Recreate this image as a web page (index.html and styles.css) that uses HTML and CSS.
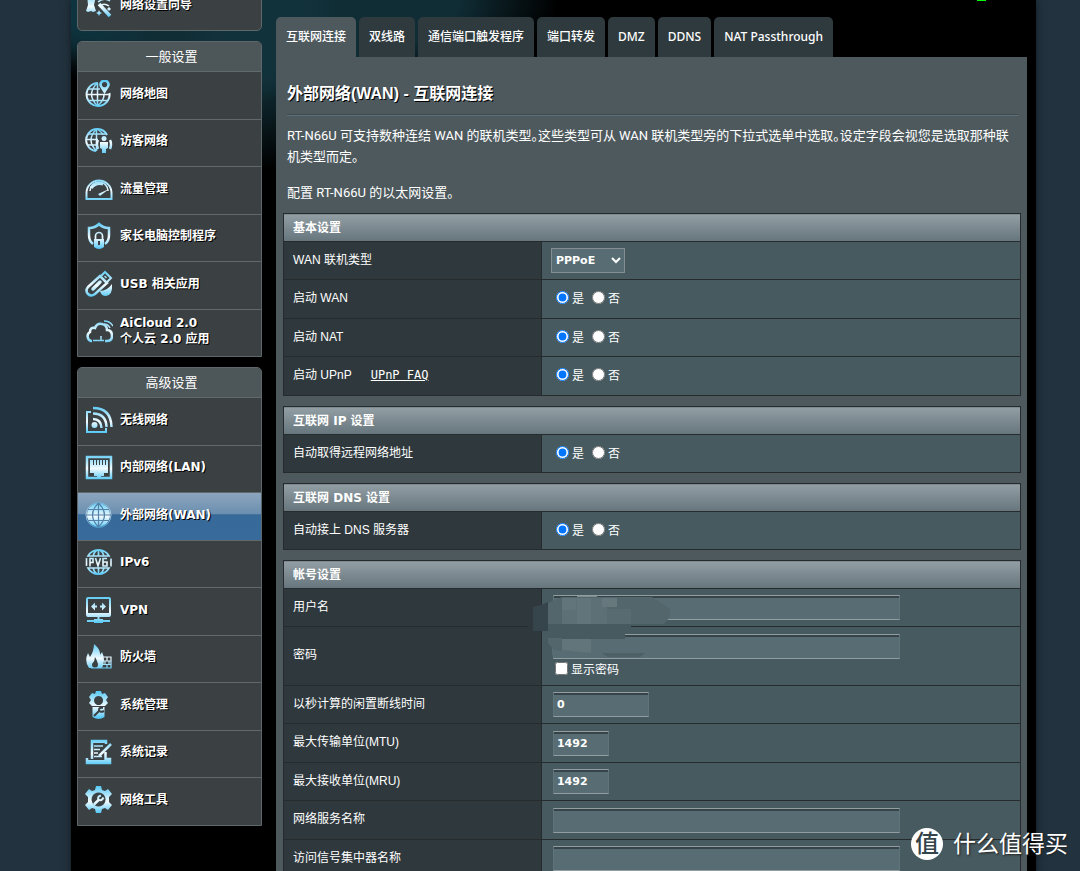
FILE: index.html
```html
<!DOCTYPE html>
<html lang="zh-CN">
<head>
<meta charset="utf-8">
<title>外部网络(WAN) - 互联网连接</title>
<link rel="stylesheet" href="styles.css">
</head>
<body>
<svg class="defs" width="0" height="0" aria-hidden="true">
  <defs>
    <linearGradient id="ice" gradientUnits="userSpaceOnUse" x1="0" y1="0" x2="0" y2="28">
      <stop offset="0" stop-color="#54c8f4"/>
      <stop offset=".55" stop-color="#f2fbff"/>
      <stop offset="1" stop-color="#45c3f5"/>
    </linearGradient>
  </defs>
</svg>
<div class="app">
  <span class="led"></span>
  <nav class="sidebar">
    <div class="group group-top">
      <a class="item" href="#"><svg class="icon" viewBox="0 0 28 28"><path class="f" d="M2 4l2-2h5l2 3-2 9 2 6-3 1-2-1-3 1-2-1 2-6z"/><path d="M14 13l11 12" stroke-width="3.500"/><path d="M13 11q6-5 12-1M16 14q4-2 8 1" stroke-width="1.500"/><path class="f" d="M14 19l1 2 2 1-2 1-1 2-1-2-2-1 2-1zM24 16l1 1 1 1-1 1-1 1-1-1-1-1 1-1z"/></svg><span>网络设置向导</span></a>
    </div>
    <div class="group">
      <h2>一般设置</h2>
      <a class="item" href="#"><svg class="icon" viewBox="0 0 28 28"><path d="M13 3A11.500 11.500 0 1 0 24.500 13" stroke-width="2"/><path d="M12.500 3v23M1 14.500h23M3 9h12M3.500 20.500h19M12.500 3q-12 11 0 23M12.500 26q7-6 6.500-12" stroke-width="1.500"/><path class="f" fill-rule="evenodd" d="M19.500 14l-4.500-7a5.200 5.200 0 1 1 9 0zM19.500 2a2.600 2.600 0 1 0 .1 0z"/></svg><span>网络地图</span></a>
      <a class="item" href="#"><svg class="icon" viewBox="0 0 28 28"><path d="M22 8A11 11 0 1 0 11 24" stroke-width="2"/><path d="M11.500 2v22M1 12.500h12M3 7h18M3 18h8M11.500 2q-11 11 0 22M12 2q6 4 6 6" stroke-width="1.500"/><circle class="f" cx="19" cy="11.500" r="2.500"/><path class="f" d="M15 15h8v6l-2 1v4h-4v-4l-2-1z"/><path d="M13 13q-2 4 0 9M25 13q2 4 0 9" stroke-width="2.500"/></svg><span>访客网络</span></a>
      <a class="item" href="#"><svg class="icon" viewBox="0 0 28 28"><path d="M1.500 24v-6a12 12 0 0 1 25 0v6z" stroke-width="2"/><path d="M5 16a9 9 0 0 1 18 0" stroke-width="1.500"/><path d="M6 13q5-6 12-4" stroke-width="3"/><path class="f" d="M24 14l-9 7-2-2z"/></svg><span>流量管理</span></a>
      <a class="item" href="#"><svg class="icon" viewBox="0 0 28 28"><path d="M8 22Q4 19 4 13V6q6 0 10-4 4 4 10 4v7q0 6-4 9" stroke-width="2.500"/><path d="M10.500 17v-3a3.500 3.500 0 0 1 7 0v3" stroke-width="1.700"/><path class="f" fill-rule="evenodd" d="M9 17h10v8q-5 4-10 0zM13 19v4h2v-4z"/></svg><span>家长电脑控制程序</span></a>
      <a class="item" href="#"><svg class="icon" viewBox="0 0 28 28"><path d="M3 17L15 6l7 7L10 24q-4 3-7 0-3-3 0-7z" stroke-width="2.500"/><path d="M16 6l4-4 6 6-4 4" stroke-width="2"/><path d="M8 19l7-7" stroke-width="3.500" stroke-linecap="round"/><path d="M19.500 6l2 2M22 4l2 2" stroke-width="1.500"/><path class="f" d="M15 21q7 0 12-7 1 11-6 12-5 0-6-5z"/></svg><span>USB 相关应用</span></a>
      <a class="item" href="#"><svg class="icon" viewBox="0 0 28 28"><path d="M7 24H6a5 5 0 0 1-1-9q0-5 5-4 2-5 7-4 5 1 5 6 5 0 5 6 0 5-5 5h-2" stroke-width="2.500"/><path d="M8 23.500h11M16 19v4M19 7q4 0 6 4M19 4q6 0 9 5" stroke-width="1.500"/></svg><span>AiCloud 2.0<br>个人云 2.0 应用</span></a>
    </div>
    <div class="group">
      <h2>高级设置</h2>
      <a class="item" href="#"><svg class="icon" viewBox="0 0 28 28"><path d="M6 6H2v20h19v-4" stroke-width="2"/><circle class="f" cx="9.500" cy="19" r="3"/><path d="M8 13q8 0 8.500 9M8 7.500q13 0 13.500 13.500M8 2q18 0 18.500 19" stroke-width="2.500"/></svg><span>无线网络</span></a>
      <a class="item" href="#"><svg class="icon" viewBox="0 0 28 28"><path d="M2 4h24v21H2z" stroke-width="2.500"/><path class="f" fill-rule="evenodd" d="M5 7h18v13h-4v3h-3v1h-4v-1H9v-3H5zM8 7v5h1V7zM11 7v5h1V7zM14 7v5h1V7zM17 7v5h1V7zM20 7v5h1V7z"/></svg><span>内部网络(LAN)</span></a>
      <a class="item active" href="#" aria-current="page"><svg class="icon" viewBox="0 0 28 28"><circle cx="13.500" cy="14" r="12.500" stroke-width="1" opacity=".6"/><circle class="f" cx="13.500" cy="14" r="11.500"/><path class="cut" d="M13.500 2v24M2 14h23M3 8.500h21M3 19.500h21M13.500 2q-12 12 0 24M13.500 2q12 12 0 24" stroke-width="1.200"/></svg><span>外部网络(WAN)</span></a>
      <a class="item" href="#"><svg class="icon" viewBox="0 0 28 28"><path d="M3 8a12 12 0 0 1 21 0zM3 20a12 12 0 0 0 21 0zM13.500 2v6M13.500 20v6M8 8q1-4 4-6M19 8q-1-4-4-6M8 20q1 4 4 6M19 20q-1 4-4 6" stroke-width="1.700"/><path d="M1.500 10v8M5 18.500v-8h3v4H5M10.500 10l2.500 8 2.500-8M22 10.500h-4v7.500h4v-4h-4M26 10.500v8" stroke-width="1.600"/></svg><span>IPv6</span></a>
      <a class="item" href="#"><svg class="icon" viewBox="0 0 28 28"><rect x="2" y="2" width="23" height="18" rx="1" stroke-width="2"/><path d="M2 18.500h23" stroke-width="3"/><path d="M8 10.500h4M15 10.500h4M13.500 20v5M2 25h23" stroke-width="2"/><path class="f" d="M6 10.500l4-4v8zM21 10.500l-4-4v8zM9 23h9v4H9z"/></svg><span>VPN</span></a>
      <a class="item" href="#"><svg class="icon" viewBox="0 0 28 28"><path class="f" fill-rule="evenodd" d="M9 1q7 6 6 11l2-3q4 8 0 16H4q-5-7-1-15l2 4q4-6 4-13zM10 14q0 4-3 7 0 4 3 4t3-4q-1-4-3-7z"/><path d="M18 14h8v11H6M17 18h9M17 21.500h9M22 14v4M20 18v3M24 18v3M22 21v4" stroke-width="1.200"/></svg><span>防火墙</span></a>
      <a class="item" href="#"><svg class="icon" viewBox="0 0 28 28"><path class="f" fill-rule="evenodd" d="M11 0h5l1 3 3-1 3 4-2 3 2 3-3 3H7l-3-3 2-3-2-3 3-4 3 1zM13.500 5a4.500 4.500 0 1 0 .1 0z"/><path class="f" d="M7.500 16h12v10q-6 4-12 0z"/><path class="cut" d="M9 25l5-5M18 17q-4-1-4 2 1 3 5 1" stroke-width="2"/></svg><span>系统管理</span></a>
      <a class="item" href="#"><svg class="icon" viewBox="0 0 28 28"><path d="M7 21V3h14v3M20.500 14v8M2 20v5h23v-4h-5" stroke-width="2.500"/><path class="f" d="M6 2h15v3H6zM1 22h25v4H1z"/><path d="M9 8h9M9 11.500h6M9 15h4M9 18.500h8" stroke-width="1.600"/><path d="M26 6L14 18" stroke-width="2.500"/></svg><span>系统记录</span></a>
      <a class="item" href="#"><svg class="icon" viewBox="0 0 28 28"><path class="f" fill-rule="evenodd" d="M11 0h5l1 4 3 1 3-2 4 5-3 3v5l3 3-4 5-3-2-3 1-1 4h-5l-1-4-3-1-3 2-4-5 3-3v-5L0 8l4-5 3 2 3-1zM13.500 6.500a7 7 0 1 0 .1 0z"/><path d="M9.500 18l4-4" stroke-width="2.500" stroke-linecap="round"/><path d="M16 9.500q-4 1-2.500 4 3 2 5-2" stroke-width="2"/></svg><span>网络工具</span></a>
    </div>
  </nav>

  <main class="main">
    <nav class="tabs">
      <a class="tab current" href="#">互联网连接</a>
      <a class="tab" href="#">双线路</a>
      <a class="tab" href="#">通信端口触发程序</a>
      <a class="tab" href="#">端口转发</a>
      <a class="tab" href="#">DMZ</a>
      <a class="tab" href="#">DDNS</a>
      <a class="tab" href="#">NAT Passthrough</a>
    </nav>
    <form class="panel">
      <header class="intro">
        <h1>外部网络(WAN) - 互联网连接</h1>
        <p>RT-N66U 可支持数种连结 WAN 的联机类型。这些类型可从 WAN 联机类型旁的下拉式选单中选取。设定字段会视您是选取那种联机类型而定。</p>
        <p>配置 RT-N66U 的以太网设置。</p>
      </header>

      <table class="settings">
        <colgroup><col class="names"><col></colgroup>
        <thead><tr><th colspan="2">基本设置</th></tr></thead>
        <tbody>
          <tr><th scope="row"><label for="wantype">WAN 联机类型</label></th><td><select id="wantype"><option>PPPoE</option></select></td></tr>
          <tr><th scope="row">启动 WAN</th><td><div class="radios"><label><input type="radio" name="wan" checked><span>是</span></label><label><input type="radio" name="wan"><span>否</span></label></div></td></tr>
          <tr><th scope="row">启动 NAT</th><td><div class="radios"><label><input type="radio" name="nat" checked><span>是</span></label><label><input type="radio" name="nat"><span>否</span></label></div></td></tr>
          <tr><th scope="row">启动 UPnP<a class="faq" href="#">UPnP FAQ</a></th><td><div class="radios"><label><input type="radio" name="upnp" checked><span>是</span></label><label><input type="radio" name="upnp"><span>否</span></label></div></td></tr>
        </tbody>
      </table>

      <table class="settings">
        <colgroup><col class="names"><col></colgroup>
        <thead><tr><th colspan="2">互联网 IP 设置</th></tr></thead>
        <tbody>
          <tr><th scope="row">自动取得远程网络地址</th><td><div class="radios"><label><input type="radio" name="ip" checked><span>是</span></label><label><input type="radio" name="ip"><span>否</span></label></div></td></tr>
        </tbody>
      </table>

      <table class="settings">
        <colgroup><col class="names"><col></colgroup>
        <thead><tr><th colspan="2">互联网 DNS 设置</th></tr></thead>
        <tbody>
          <tr><th scope="row">自动接上 DNS 服务器</th><td><div class="radios"><label><input type="radio" name="dns" checked><span>是</span></label><label><input type="radio" name="dns"><span>否</span></label></div></td></tr>
        </tbody>
      </table>

      <table class="settings">
        <colgroup><col class="names"><col></colgroup>
        <thead><tr><th colspan="2">帐号设置</th></tr></thead>
        <tbody>
          <tr><th scope="row"><label for="user">用户名</label></th><td class="masked"><input class="text wide" id="user" type="text">
            <svg class="mosaic" viewBox="0 0 144 70" aria-hidden="true">
              <path fill="#2f393d" d="M0 36h13v6H0z"/>
              <path fill="#36454b" d="M5 18l8-2 7-3v29H5z"/>
              <path fill="#53666c" d="M20 14l14-6h90l18 12v8l-6 7H20z"/>
              <path fill="#5d7076" d="M34 9h45v26H34z"/>
              <path fill="#62757a" d="M34 9h14v12H34zM49 9h14v26H49z"/>
              <path fill="#67787d" d="M74 9h15v9H74z"/>
              <path fill="#586b71" d="M79 20h24v15H79z"/>
              <path fill="#808d91" d="M49 7h20v1H49z"/>
              <path fill="#465a5f" d="M14 42h6v7h-6zM20 35h83v9h-6v6H20z"/>
              <path fill="#576d73" d="M24 50h82v16H24z"/>
              <path fill="#53666c" d="M20 49h14v13l-8-1-6-7z"/>
              <path fill="#62757b" d="M34 50h29v14l-29-3z"/>
              <path fill="#4c6066" d="M74 64h43l-5 4H80z"/>
            </svg></td></tr>
          <tr class="tall"><th scope="row"><label for="pass">密码</label></th><td><input class="text wide" id="pass" type="password"><label class="show"><input type="checkbox"><span>显示密码</span></label></td></tr>
          <tr><th scope="row"><label for="idle">以秒计算的闲置断线时间</label></th><td><input class="text mid" id="idle" type="text" value="0"></td></tr>
          <tr><th scope="row"><label for="mtu">最大传输单位(MTU)</label></th><td><input class="text short" id="mtu" type="text" value="1492"></td></tr>
          <tr><th scope="row"><label for="mru">最大接收单位(MRU)</label></th><td><input class="text short" id="mru" type="text" value="1492"></td></tr>
          <tr><th scope="row"><label for="svc">网络服务名称</label></th><td><input class="text wide" id="svc" type="text"></td></tr>
          <tr><th scope="row"><label for="ac">访问信号集中器名称</label></th><td><input class="text wide" id="ac" type="text"></td></tr>
        </tbody>
      </table>
    </form>
  </main>
</div>
<div class="watermark"><span class="seal">值</span><span>什么值得买</span></div>
</body>
</html>
```

FILE: styles.css
```css
* { box-sizing: border-box; }

body {
  margin: 0;
  height: 100vh;
  overflow: hidden;
  padding: 0 44px 0 71px;
  background: #22333f;
  color: #fff;
  font: 12px/16px "Liberation Sans", "Noto Sans CJK SC", sans-serif;
}

.defs { position: absolute; }

.app {
  position: relative;
  display: flex;
  gap: 14px;
  align-items: flex-start;
  padding: 0 9px 0 6px;
  min-height: 100vh;
  background:
    radial-gradient(ellipse 90px 65px at 10px 0, #0d343f 40%, transparent),
    radial-gradient(ellipse 90px 160px at 190px 10px, #12323b 40%, transparent),
    radial-gradient(ellipse 330px 110px at 190px 0, #102c35 60%, transparent 90%),
    #000;
  box-shadow: 0 0 8px #10191f;
}

.led {
  position: absolute;
  top: 0;
  right: 50px;
  width: 9px;
  height: 1px;
  background: #0f0;
}

/* Side menu */
.sidebar {
  flex: 0 0 185px;
  display: flex;
  flex-direction: column;
  gap: 10px;
}

.group {
  border: 1px solid #5e676a;
  border-radius: 5px 5px 0 0;
  background: #3b4042;
  overflow: hidden;
}

.group-top {
  margin-top: -18px;
  border-radius: 0 0 5px 5px;
}

.group h2 {
  margin: 0;
  padding: 7px 0 6px 4px;
  background: #4d5659;
  font-size: 13px;
  font-weight: 400;
  line-height: 16px;
  text-align: center;
}

.item {
  display: flex;
  align-items: center;
  gap: 7px;
  min-height: 47px;
  padding: 0 7px 4px;
  border-top: 1px solid #62696c;
  color: #fff;
  font: bold 12px/16px "DejaVu Sans", "Noto Sans CJK SC", sans-serif;
  text-decoration: none;
  text-shadow: 1px 1px 0 #000;
}

.item:nth-child(even) { min-height: 48px; }

.item.active {
  background: linear-gradient(#8ca5bd, #6b8fb0 45%, #376999 46%, #386a9b);
}

.icon {
  flex: none;
  width: 28px;
  height: 28px;
  fill: none;
  stroke: url(#ice);
}

.icon .f { fill: url(#ice); stroke: none; }
.icon .cut { stroke: #3b4042; }
.active .icon .cut { stroke: #5580a8; }

/* Tabs */
.main { flex: 1; min-width: 0; padding-top: 17px; }

.tabs { display: flex; gap: 3px; }

.tab {
  padding: 11px 10px;
  border-radius: 5px 5px 0 0;
  background: #2f3a3e;
  color: #fff;
  font: 500 12px/18px "Noto Sans", "Noto Sans CJK SC", sans-serif;
  text-decoration: none;
}

.tab.current { background: #4d595d; }

/* Content panel */
.panel {
  padding: 0 6px 0 7px;
  background: #4d595d;
}

.intro { padding: 26px 3px 10px 4px; }

h1 {
  margin: 0 0 9px;
  padding-bottom: 10px;
  border-bottom: 1px solid #5b7078;
  box-shadow: inset 0 -1px #3e4a4f;
  font-size: 16px;
  line-height: 22px;
  text-shadow: 1px 1px 0 #000;
}

.intro p {
  margin: 0 0 15px;
  font: 13px/21px Roboto, "Noto Sans CJK SC", sans-serif;
  font-feature-settings: "halt";
}

.intro p:last-child { margin: 0; }

.settings {
  width: 100%;
  margin-bottom: 10px;
  border-collapse: collapse;
  table-layout: fixed;
}

.names { width: 35%; }

.settings th,
.settings td {
  padding: 0 9px;
  border: 1px solid #262b2d;
  font-weight: 400;
  text-align: left;
}

.settings thead th {
  height: 28px;
  background: linear-gradient(#929ea4, #66757c);
  font: bold 12px/16px "DejaVu Sans", "Noto Sans CJK SC", sans-serif;
}

.settings tbody th {
  height: 38px;
  padding-bottom: 2px;
  background: #2f393d;
}

.settings tbody tr:nth-child(even) th { height: 39px; }
.settings tbody tr.tall th { height: 59px; }
.settings td { background: #475a5f; }

select {
  display: block;
  width: 74px;
  height: 25px;
  border: 1px solid #858f93;
  background: #576d73;
  color: #fff;
  font: bold 11px/16px "DejaVu Sans", sans-serif;
}

.text {
  display: block;
  height: 25px;
  margin-left: 2px;
  padding: 0 3px;
  border: 1px solid #5f747a;
  border-top: 1px solid #929da1;
  border-bottom-color: #929da1;
  background: #576d73;
  box-shadow: inset 0 2px #36444a;
  color: #fff;
  font: bold 11px/16px "DejaVu Sans", sans-serif;
}

.wide { width: 347px; }
.mid { width: 96px; }
.short { width: 56px; }

.radios { display: flex; gap: 8px; padding-left: 5px; }

.radios label,
.show {
  display: flex;
  gap: 3px;
  align-items: center;
}

.radios input,
.show input {
  width: 13px;
  height: 13px;
  margin: 0 0 3px;
}

.show { margin: 3px 0 0 4px; }

.faq {
  margin-left: 19px;
  color: #fff;
  font: 12px/16px "DejaVu Sans Mono", monospace;
}

.masked { position: relative; }

.mosaic {
  position: absolute;
  left: -14px;
  top: 0;
  width: 144px;
  height: 70px;
  pointer-events: none;
}

/* Corner mark */
.watermark {
  position: absolute;
  right: 12px;
  bottom: 10px;
  display: flex;
  align-items: center;
  gap: 10px;
  font-size: 23px;
  line-height: 34px;
  text-shadow: 1px 1px 2px #222;
}

.seal {
  width: 32px;
  height: 32px;
  border-radius: 50%;
  background: #fff;
  color: #33444a;
  font-size: 24px;
  font-weight: 500;
  line-height: 32px;
  text-align: center;
  text-shadow: none;
}
```
